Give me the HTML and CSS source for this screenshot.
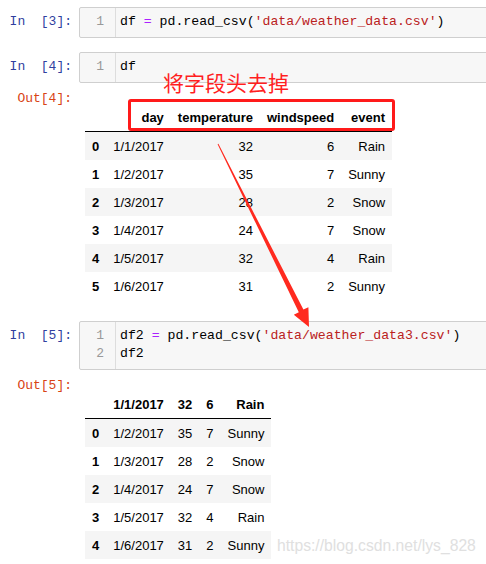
FILE: index.html
```html
<!DOCTYPE html>
<html>
<head>
<meta charset="utf-8">
<link rel="stylesheet" href="styles.css">
</head>
<body>
<div class="nb">
  <div class="cell">
    <div class="prompt in">In&nbsp;&nbsp;[3]:</div>
    <div class="code">
      <div class="gutter">1</div>
      <div class="src"><div class="line">df <span class="op">=</span> pd.read_csv(<span class="str">'data/weather_data.csv'</span>)</div></div>
    </div>
  </div>

  <div class="cell gap">
    <div class="prompt in">In&nbsp;&nbsp;[4]:</div>
    <div class="code">
      <div class="gutter">1</div>
      <div class="src"><div class="line">df</div></div>
    </div>
  </div>

  <div class="out">
    <div class="prompt outp">Out[4]:</div>
    <table class="df">
      <thead>
        <tr><th></th><th>day</th><th>temperature</th><th>windspeed</th><th>event</th></tr>
      </thead>
      <tbody>
        <tr><th>0</th><td>1/1/2017</td><td>32</td><td>6</td><td>Rain</td></tr>
        <tr><th>1</th><td>1/2/2017</td><td>35</td><td>7</td><td>Sunny</td></tr>
        <tr><th>2</th><td>1/3/2017</td><td>28</td><td>2</td><td>Snow</td></tr>
        <tr><th>3</th><td>1/4/2017</td><td>24</td><td>7</td><td>Snow</td></tr>
        <tr><th>4</th><td>1/5/2017</td><td>32</td><td>4</td><td>Rain</td></tr>
        <tr><th>5</th><td>1/6/2017</td><td>31</td><td>2</td><td>Sunny</td></tr>
      </tbody>
    </table>
  </div>

  <div class="cell gap2">
    <div class="prompt in">In&nbsp;&nbsp;[5]:</div>
    <div class="code">
      <div class="gutter">1<br>2</div>
      <div class="src">
        <div class="line">df2 <span class="op">=</span> pd.read_csv(<span class="str">'data/weather_data3.csv'</span>)</div>
        <div class="line">df2</div>
      </div>
    </div>
  </div>

  <div class="out">
    <div class="prompt outp">Out[5]:</div>
    <table class="df">
      <thead>
        <tr><th></th><th>1/1/2017</th><th>32</th><th>6</th><th>Rain</th></tr>
      </thead>
      <tbody>
        <tr><th>0</th><td>1/2/2017</td><td>35</td><td>7</td><td>Sunny</td></tr>
        <tr><th>1</th><td>1/3/2017</td><td>28</td><td>2</td><td>Snow</td></tr>
        <tr><th>2</th><td>1/4/2017</td><td>24</td><td>7</td><td>Snow</td></tr>
        <tr><th>3</th><td>1/5/2017</td><td>32</td><td>4</td><td>Rain</td></tr>
        <tr><th>4</th><td>1/6/2017</td><td>31</td><td>2</td><td>Sunny</td></tr>
      </tbody>
    </table>
  </div>

  <div class="note">将字段头去掉</div>
  <div class="redbox"></div>
  <svg class="arrow" width="486" height="564" viewBox="0 0 486 564">
    <polygon fill="#ff2a1f" points="218.4,143.8 303.4,309.6 308.4,307.2 309,327 293.8,314.8 298.8,312.2 217.6,144.2"/>
  </svg>
  <div class="mark">https://blog.csdn.net/lys_828</div>
</div>
</body>
</html>
```

FILE: styles.css
```css
html, body {
  margin: 0;
  padding: 0;
  background: #ffffff;
  overflow: hidden;
}

.nb {
  position: relative;
  width: 486px;
  height: 564px;
  padding-top: 7px;
  box-sizing: border-box;
  overflow: hidden;
}

.cell {
  display: flex;
  align-items: flex-start;
}

.cell.gap { margin-top: 14px; }
.cell.gap2 { margin-top: 21px; }

.prompt {
  flex: 0 0 79px;
  box-sizing: border-box;
  padding-right: 7px;
  text-align: right;
  font-family: "Liberation Mono", "DejaVu Sans Mono", monospace;
  font-size: 13px;
  line-height: 18px;
  white-space: nowrap;
}

.prompt.in {
  color: #303f9f;
  padding-top: 6px;
}

.prompt.outp {
  color: #d84315;
}

.code {
  flex: 1 0 auto;
  display: flex;
  margin-right: -20px;
  background: #f7f7f7;
  border: 1px solid #cfcfcf;
  border-radius: 2px;
}

.gutter {
  width: 36px;
  box-sizing: border-box;
  padding: 5px 11px 6px 0;
  text-align: right;
  border-right: 1px solid #dddddd;
  color: #999999;
  font-family: "Liberation Mono", "DejaVu Sans Mono", monospace;
  font-size: 13px;
  line-height: 18px;
}

.src {
  padding: 5px 0 6px 4px;
  font-family: "Liberation Mono", "DejaVu Sans Mono", monospace;
  font-size: 13.2px;
  line-height: 18px;
  color: #000000;
}

.line {
  white-space: pre;
  height: 18px;
}

.op { color: #aa22ff; }
.str { color: #ba2121; }

.out {
  display: flex;
  align-items: flex-start;
  margin-top: 7px;
}

.df {
  margin: 13px 0 0 6px;
  border-collapse: collapse;
  border-spacing: 0;
  font-family: "Liberation Sans", Arial, sans-serif;
  font-size: 13px;
  line-height: 15px;
  color: #000000;
}

.df th, .df td {
  padding: 6.5px 7px;
  text-align: right;
  vertical-align: middle;
  white-space: nowrap;
}

.df th { font-weight: bold; }

.df thead tr {
  border-bottom: 1px solid #000000;
}

.df tbody tr:nth-child(odd) {
  background: #f5f5f5;
}

.note {
  position: absolute;
  left: 163px;
  top: 72px;
  font-family: "Noto Sans CJK SC", sans-serif;
  font-size: 21px;
  line-height: 21px;
  color: #ff1f1f;
  white-space: nowrap;
}

.redbox {
  position: absolute;
  left: 128px;
  top: 99px;
  width: 267px;
  height: 32px;
  box-sizing: border-box;
  border: 3px solid #ff1a1a;
  border-radius: 3px;
}

.arrow {
  position: absolute;
  left: 0;
  top: 0;
}

.mark {
  position: absolute;
  left: 277px;
  top: 537px;
  font-family: "Liberation Sans", Arial, sans-serif;
  font-size: 15.7px;
  line-height: 18px;
  color: #e0e0e0;
  white-space: nowrap;
}
```
